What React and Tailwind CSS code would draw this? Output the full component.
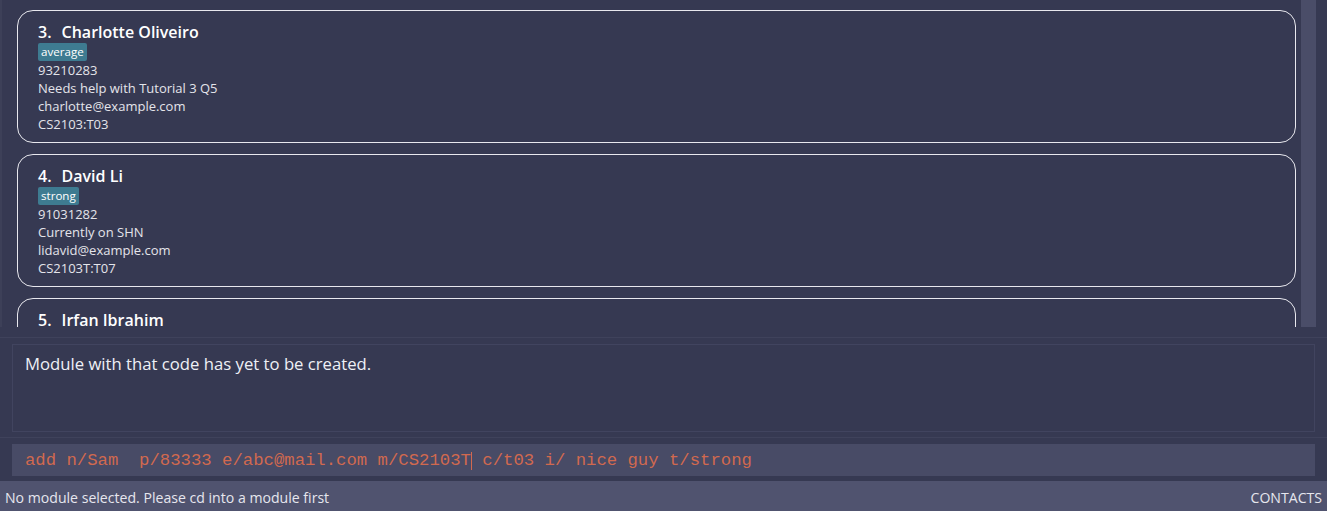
import React from 'react';

const persons = [
  {
    idx: 3,
    name: 'Charlotte Oliveiro',
    tag: 'average',
    phone: '93210283',
    remark: 'Needs help with Tutorial 3 Q5',
    email: 'charlotte@example.com',
    group: 'CS2103:T03',
  },
  {
    idx: 4,
    name: 'David Li',
    tag: 'strong',
    phone: '91031282',
    remark: 'Currently on SHN',
    email: 'lidavid@example.com',
    group: 'CS2103T:T07',
  },
  {
    idx: 5,
    name: 'Irfan Ibrahim',
    tag: 'weak',
    phone: '92492021',
    remark: 'Quiet in class',
    email: 'irfan@example.com',
    group: 'CS2103T:T01',
  },
];

const PersonCard = ({ p }) => (
  <div className="shrink-0 rounded-[16px] border border-[#e8e8ee] px-[20px] pt-[11px] pb-[9px] text-[13px] leading-[18px] text-[#e4e4ea]">
    <div className="text-[16px] leading-[20px] font-semibold text-white">
      <span className="mr-[10px]">{p.idx}.</span>
      {p.name}
    </div>
    <div className="flex h-[19px] items-center">
      <span className="rounded-[2px] bg-[#3e7b91] px-[3px] text-[11.6px] leading-[18px] text-white">
        {p.tag}
      </span>
    </div>
    <div>{p.phone}</div>
    <div>{p.remark}</div>
    <div>{p.email}</div>
    <div>{p.group}</div>
  </div>
);

export default function App() {
  return (
    <div
      className="flex h-[511px] w-full flex-col overflow-hidden bg-[#363952]"
      style={{ fontFamily: '"Open Sans", "Noto Sans", sans-serif' }}
    >
      {/* person list */}
      <div className="flex h-[327px] shrink-0">
        <div className="w-[2px] bg-[#3d4058]" />
        <div className="flex flex-1 flex-col gap-[11px] overflow-hidden pt-[10px] pl-[15px] pr-[5px]">
          {persons.map((p) => (
            <PersonCard key={p.idx} p={p} />
          ))}
        </div>
        <div className="w-[15px] bg-[#4a4d68]" />
        <div className="w-[11px]" />
      </div>

      <div className="h-[10px] shrink-0" />
      <div className="h-px shrink-0 bg-[#3f425b]" />

      {/* result display */}
      <div className="flex shrink-0 px-[12px] pt-[6px] pb-[5px]">
        <div className="h-[88px] w-[1303px] border border-[#41445f] px-[12px] pt-[7px] text-[16.7px] leading-[24px] text-[#eef0f6]">
          Module with that code has yet to be created.
        </div>
      </div>

      <div className="h-px shrink-0 bg-[#3f425b]" />

      {/* command box */}
      <div className="flex shrink-0 px-[12px] pt-[6px] pb-[5px]">
        <div
          className="flex h-[32px] w-[1304px] items-center bg-[#484b66] pl-[13px] pt-[2px] text-[17.3px] text-[#d1694f]"
          style={{ fontFamily: '"Liberation Mono", monospace' }}
        >
          <span className="whitespace-pre">add n/Sam  p/83333 e/abc@mail.com m/CS2103T</span>
          <span className="inline-block h-[18px] w-px bg-[#d1694f]" />
          <span className="whitespace-pre"> c/t03 i/ nice guy t/strong</span>
        </div>
      </div>

      {/* status bar */}
      <div className="flex h-[30px] shrink-0 items-center justify-between bg-[#50536f] pt-[3px] pl-[5px] pr-[5px] text-[14.1px] text-[#e6e6ee]">
        <span>No module selected. Please cd into a module first</span>
        <span>CONTACTS</span>
      </div>
    </div>
  );
}
